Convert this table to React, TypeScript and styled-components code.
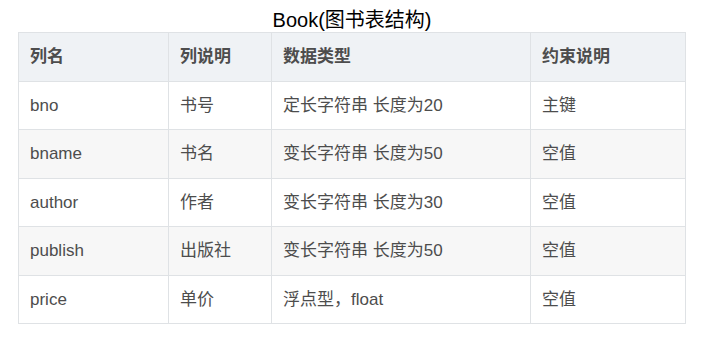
import React from 'react';
import styled, { createGlobalStyle } from 'styled-components';

const GlobalStyle = createGlobalStyle`
    html, body {
        margin: 0;
        padding: 0;
        background: #fff;
    }
    body {
        font-family: "Liberation Sans", Arial, "Noto Sans CJK SC", sans-serif;
    }
`;

const Wrapper = styled.div`
    padding: 8px 18px 0 18px;
`;

const Table = styled.table`
    border-collapse: collapse;
    width: 667px;
    table-layout: fixed;
    color: #4d4d4d;
    font-size: 17px;
    line-height: 25.5px;
`;

const Caption = styled.caption`
    font-size: 20px;
    line-height: 24px;
    color: #000;
`;

const HeadRow = styled.tr`
    background: #eff2f5;
`;

const Row = styled.tr<{ $striped: boolean }>`
    background: ${props => (props.$striped ? '#f7f7f7' : '#fff')};
`;

const Th = styled.th<{ $width: number }>`
    box-sizing: border-box;
    width: ${props => props.$width}px;
    border: 1px solid #dfe2e5;
    padding: 11px 12px 11px 11px;
    text-align: left;
    font-weight: bold;
`;

const Td = styled.td`
    border: 1px solid #dfe2e5;
    padding: 11px 12px 11px 11px;
    white-space: nowrap;
`;

const columns = [
    { title: '列名', width: 150 },
    { title: '列说明', width: 103 },
    { title: '数据类型', width: 259 },
    { title: '约束说明', width: 155 },
];

const rows = [
    ['bno', '书号', '定长字符串 长度为20', '主键'],
    ['bname', '书名', '变长字符串 长度为50', '空值'],
    ['author', '作者', '变长字符串 长度为30', '空值'],
    ['publish', '出版社', '变长字符串 长度为50', '空值'],
    ['price', '单价', '浮点型，float', '空值'],
];

const App = () => {
    return (
        <Wrapper>
            <GlobalStyle />
            <Table>
                <Caption>Book(图书表结构)</Caption>
                <thead>
                    <HeadRow>
                        {columns.map(col => (
                            <Th key={col.title} $width={col.width}>
                                {col.title}
                            </Th>
                        ))}
                    </HeadRow>
                </thead>
                <tbody>
                    {rows.map((row, i) => (
                        <Row key={row[0]} $striped={i % 2 === 1}>
                            {row.map((cell, j) => (
                                <Td key={j}>{cell}</Td>
                            ))}
                        </Row>
                    ))}
                </tbody>
            </Table>
        </Wrapper>
    );
};

export default App;
